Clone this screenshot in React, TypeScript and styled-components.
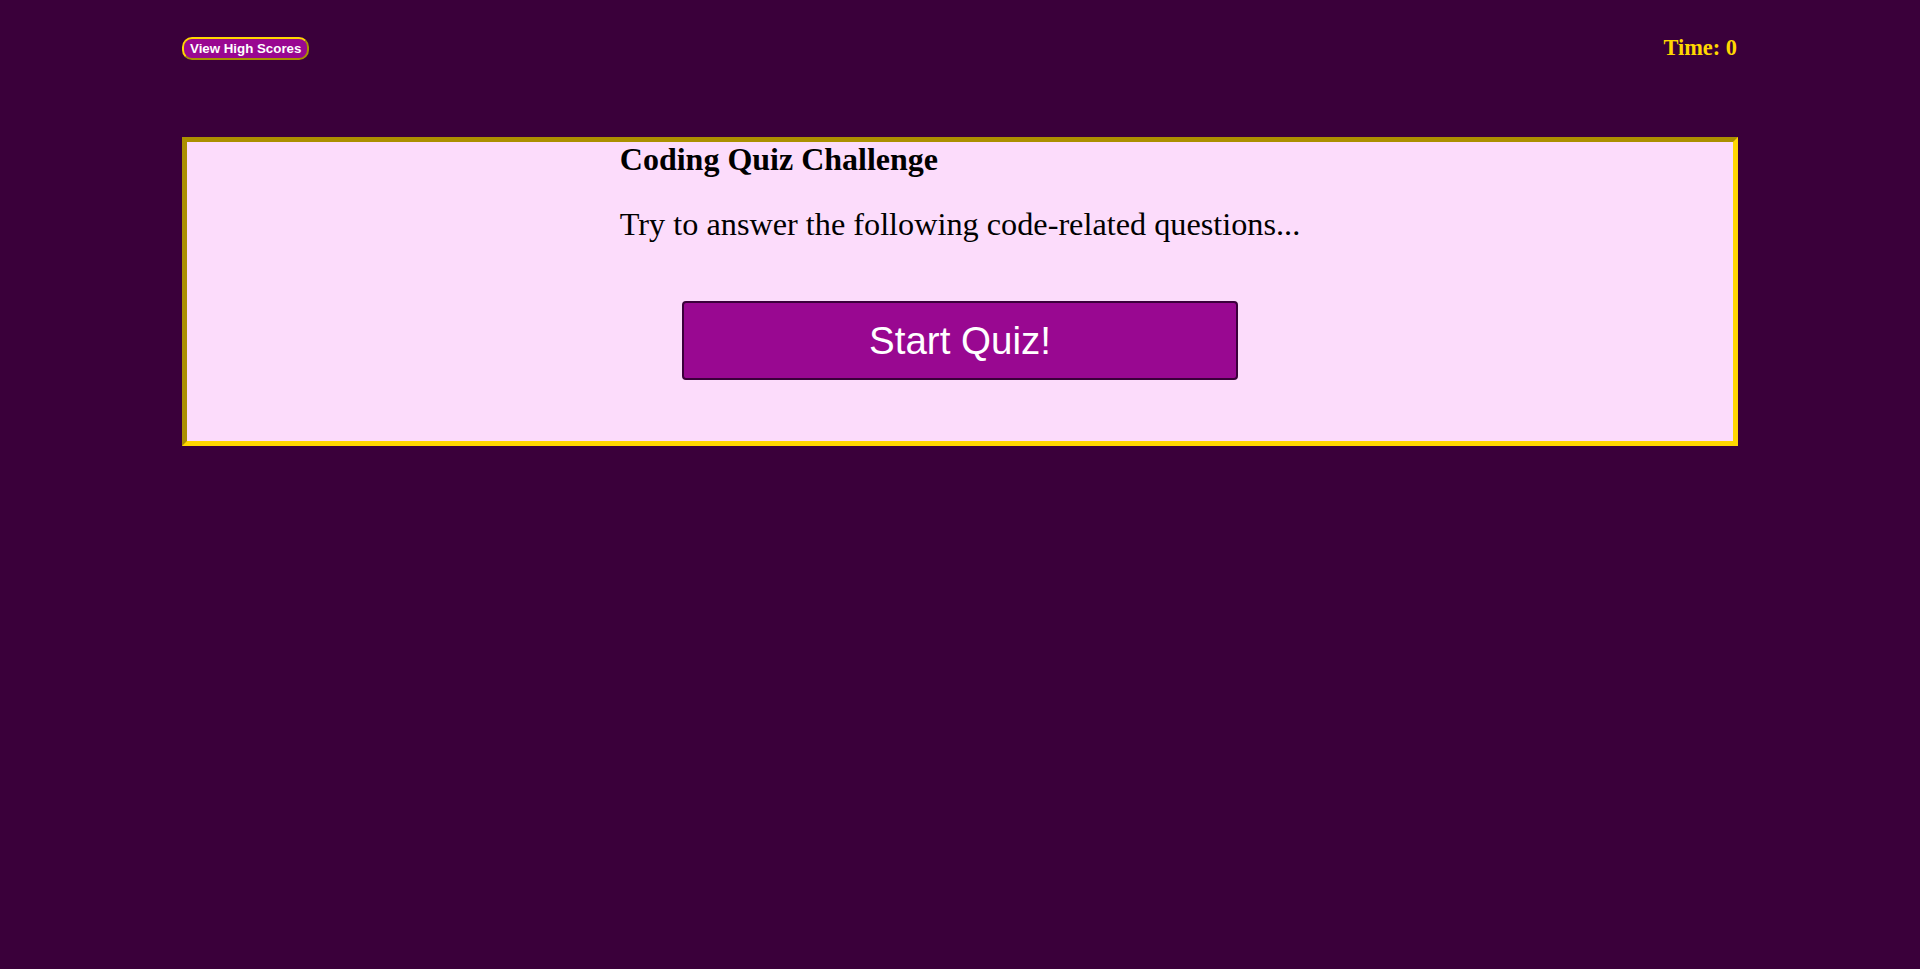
import React from "react";
import styled, { createGlobalStyle } from "styled-components";

const GlobalStyle = createGlobalStyle`
  html, body {
    margin: 0;
    padding: 0;
    background: #3a003a;
  }
  body {
    font-family: "Liberation Serif", "Times New Roman", serif;
  }
`;

const Page = styled.div`
  padding: 36px 182px 0;
  min-height: 969px;
  box-sizing: border-box;
`;

const Header = styled.header`
  display: flex;
  justify-content: space-between;
  align-items: center;
  height: 24px;
`;

const ScoresButton = styled.button`
  height: 23px;
  padding: 0 6px;
  background: #990891;
  color: #ffffff;
  border: 2px outset gold;
  border-radius: 10px;
  font-family: "Liberation Sans", Arial, sans-serif;
  font-weight: bold;
  font-size: 13.3px;
  white-space: nowrap;
  cursor: pointer;
  box-sizing: border-box;
`;

const Timer = styled.div`
  color: gold;
  font-weight: bold;
  font-size: 22.4px;
  margin-right: 1px;
`;

const Card = styled.main`
  margin-top: 77px;
  height: 309px;
  box-sizing: border-box;
  border: 5px inset gold;
  background: #fcdcfb;
`;

const Content = styled.div`
  display: flex;
  flex-direction: column;
  align-items: center;
`;

const TextBlock = styled.div`
  display: flex;
  flex-direction: column;
  align-items: flex-start;
`;

const Title = styled.h1`
  margin: 0;
  font-size: 32px;
  line-height: 34px;
  font-weight: bold;
  color: #000;
`;

const Intro = styled.p`
  margin: 30px 0 0;
  font-size: 32.25px;
  color: #000;
`;

const StartButton = styled.button`
  margin-top: 58px;
  width: 556px;
  height: 79px;
  background: #990891;
  color: #ffffff;
  border: 2px solid #3a003a;
  border-radius: 4px;
  font-family: "Liberation Sans", Arial, sans-serif;
  font-size: 38.5px;
  cursor: pointer;
`;

export default function App() {
  return (
    <>
      <GlobalStyle />
      <Page>
        <Header>
          <ScoresButton>View High Scores</ScoresButton>
          <Timer>Time: 0</Timer>
        </Header>
        <Card>
          <Content>
            <TextBlock>
              <Title>Coding Quiz Challenge</Title>
              <Intro>Try to answer the following code-related questions...</Intro>
            </TextBlock>
            <StartButton>Start Quiz!</StartButton>
          </Content>
        </Card>
      </Page>
    </>
  );
}
